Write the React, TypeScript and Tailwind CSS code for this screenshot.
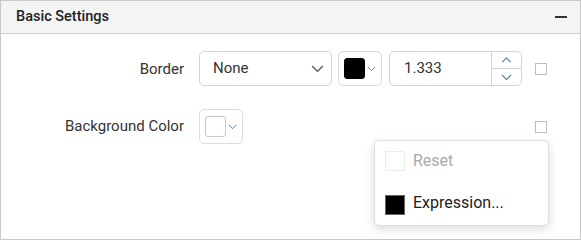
const Chevron = ({ size = 12, color = "#555" }: { size?: number; color?: string }) => (
  <svg width={size} height={size / 2 + 1} viewBox="0 0 12 7" fill="none">
    <path d="M1 1l5 5 5-5" stroke={color} strokeWidth="1.2" />
  </svg>
);

const ColorButton = ({ color, swatchBorder }: { color: string; swatchBorder: string }) => (
  <div className="flex h-[35px] w-[44px] items-center rounded-[5px] border border-[#dcdcdc] bg-white pl-[5px]">
    <div
      className="h-[21px] w-[21px] rounded-[3px] border"
      style={{ backgroundColor: color, borderColor: swatchBorder }}
    />
    <div className="ml-[2px] flex items-center">
      <Chevron size={9} color="#4a6fa5" />
    </div>
  </div>
);

const Checkbox = () => <div className="h-[12px] w-[12px] border border-[#bdbdbd] bg-white" />;

export default function App() {
  return (
    <div
      className="relative h-[240px] w-[581px] border border-[#c8c8c8] bg-white text-[#333]"
      style={{ fontFamily: "Roboto, 'Liberation Sans', sans-serif" }}
    >
      <div className="flex h-[33px] items-center justify-between border-b border-[#cfcfcf] bg-[#f4f4f4] pl-[15px] pr-[13px]">
        <span className="text-[14.5px] font-medium text-[#222]">Basic Settings</span>
        <div className="h-[2px] w-[12px] bg-[#333]" />
      </div>

      <div className="flex flex-col gap-[23px] pt-[17px]">
        <div className="flex items-center">
          <div className="w-[183px] pt-[2px] text-right text-[15px]">Border</div>
          <div className="ml-[15px] flex items-center gap-[6px]">
            <div className="flex h-[35px] w-[133px] items-center justify-between rounded-[5px] border border-[#d4d4d4] pl-[13px] pr-[7px] text-[15px]">
              <span>None</span>
              <Chevron size={13} />
            </div>
            <ColorButton color="#000" swatchBorder="#000" />
            <div className="ml-[1px] flex h-[35px] w-[133px] items-stretch rounded-[5px] border border-[#d4d4d4]">
              <div className="flex flex-1 items-center pl-[14px] text-[15px]">1.333</div>
              <div className="flex w-[30px] flex-col border-l border-[#d4d4d4]">
                <div className="flex flex-1 items-center justify-center border-b border-[#d4d4d4]">
                  <svg width="11" height="6" viewBox="0 0 12 7" fill="none">
                    <path d="M1 6l5-5 5 5" stroke="#4a6fa5" strokeWidth="1.2" />
                  </svg>
                </div>
                <div className="flex flex-1 items-center justify-center">
                  <Chevron size={11} color="#4a6fa5" />
                </div>
              </div>
            </div>
          </div>
          <div className="ml-[13px]">
            <Checkbox />
          </div>
        </div>

        <div className="flex items-center">
          <div className="w-[183px] text-right text-[15px]">Background Color</div>
          <div className="ml-[15px] w-[323px]">
            <ColorButton color="#fff" swatchBorder="#c8c8c8" />
          </div>
          <div className="ml-[13px]">
            <Checkbox />
          </div>
        </div>
      </div>

      <div className="absolute left-[373px] top-[139px] flex h-[86px] w-[175px] flex-col rounded-[5px] border border-[#dedede] bg-white pl-[10px] shadow-[0_3px_10px_rgba(0,0,0,0.15)]">
        <div className="mt-[10px] flex h-[20px] items-center gap-[8px]">
          <div className="h-[20px] w-[20px] border border-[#ececec] bg-white" />
          <span className="text-[16px] leading-[20px] text-[#aaa]">Reset</span>
        </div>
        <div className="mt-[24px] flex h-[20px] items-center gap-[8px]">
          <div className="h-[20px] w-[20px] border border-[#666] bg-black" />
          <span className="-mt-[4px] text-[16px] leading-[20px] text-[#222]">Expression...</span>
        </div>
      </div>
    </div>
  );
}
